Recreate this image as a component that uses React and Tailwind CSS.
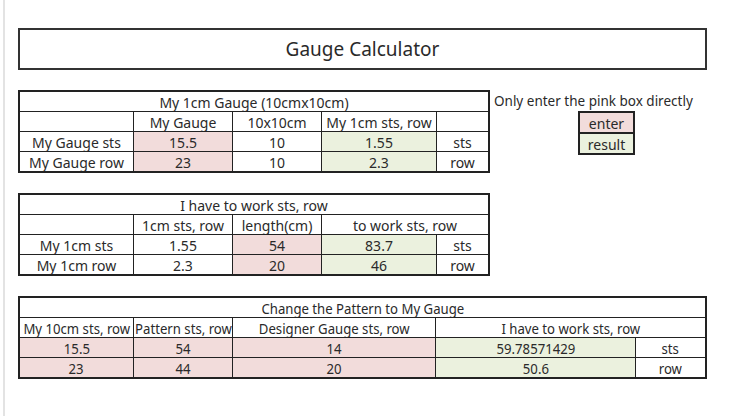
import React from "react";

const F = { fontFamily: '"Noto Sans", "Noto Sans CJK KR", sans-serif' };

function Cell({ children, bg = "bg-white", span = "", narrow = false }) {
  return (
    <div className={`${bg} ${span} flex items-center justify-center h-[19px] pt-[2px] text-[14px] leading-none text-[#2a2a2a] whitespace-nowrap overflow-hidden`}>
      {narrow ? <span className="inline-block scale-x-[0.94]">{children}</span> : children}
    </div>
  );
}

const P = "bg-[#f2dcdb]";
const G = "bg-[#ebf1de]";

export default function App() {
  return (
    <div className="flex w-[743px] h-[416px] bg-white overflow-hidden" style={F}>
      <div className="ml-[3px] w-[2px] h-full bg-[#e3e3e3]" />
      <div className="ml-[13px] pt-[28px] flex flex-col">
        <div className="w-[689px] h-[42px] border-2 border-[#333] flex items-center justify-center text-[19px] text-[#2a2a2a]">
          Gauge Calculator
        </div>

        <div className="mt-[20px] flex">
          <div className="border-2 border-[#222] bg-[#222] grid grid-cols-[113px_98px_88px_114px_51px] gap-px">
            <Cell span="col-span-5">My 1cm Gauge (10cmx10cm)</Cell>
            <Cell></Cell>
            <Cell>My Gauge</Cell>
            <Cell>10x10cm</Cell>
            <Cell>My 1cm sts, row</Cell>
            <Cell></Cell>
            <Cell>My Gauge sts</Cell>
            <Cell bg={P}>15.5</Cell>
            <Cell>10</Cell>
            <Cell bg={G}>1.55</Cell>
            <Cell>sts</Cell>
            <Cell>My Gauge row</Cell>
            <Cell bg={P}>23</Cell>
            <Cell>10</Cell>
            <Cell bg={G}>2.3</Cell>
            <Cell>row</Cell>
          </div>
          <div className="ml-[4px] flex flex-col items-start">
            <div className="h-[21px] pt-[2px] flex items-center text-[13.5px] text-[#2a2a2a] leading-none">Only enter the pink box directly</div>
            <div className="ml-[84px] border-2 border-[#222] bg-[#222] grid grid-cols-[53px] gap-[2px]">
              <Cell bg={P}>enter</Cell>
              <Cell bg={G}>result</Cell>
            </div>
          </div>
        </div>

        <div className="mt-[20px] flex">
          <div className="border-2 border-[#222] bg-[#222] grid grid-cols-[113px_98px_88px_114px_51px] gap-px">
            <Cell span="col-span-5">I have to work sts, row</Cell>
            <Cell></Cell>
            <Cell>1cm sts, row</Cell>
            <Cell>length(cm)</Cell>
            <Cell span="col-span-2">to work sts, row</Cell>
            <Cell>My 1cm sts</Cell>
            <Cell>1.55</Cell>
            <Cell bg={P}>54</Cell>
            <Cell bg={G}>83.7</Cell>
            <Cell>sts</Cell>
            <Cell>My 1cm row</Cell>
            <Cell>2.3</Cell>
            <Cell bg={P}>20</Cell>
            <Cell bg={G}>46</Cell>
            <Cell>row</Cell>
          </div>
        </div>

        <div className="mt-[20px] flex">
          <div className="border-2 border-[#222] bg-[#222] grid grid-cols-[113px_98px_202px_199px_69px] gap-px">
            <Cell narrow span="col-span-5">Change the Pattern to My Gauge</Cell>
            <Cell narrow>My 10cm sts, row</Cell>
            <Cell narrow>Pattern sts, row</Cell>
            <Cell narrow>Designer Gauge sts, row</Cell>
            <Cell narrow span="col-span-2">I have to work sts, row</Cell>
            <Cell narrow bg={P}>15.5</Cell>
            <Cell narrow bg={P}>54</Cell>
            <Cell narrow bg={P}>14</Cell>
            <Cell narrow bg={G}>59.78571429</Cell>
            <Cell narrow>sts</Cell>
            <Cell narrow bg={P}>23</Cell>
            <Cell narrow bg={P}>44</Cell>
            <Cell narrow bg={P}>20</Cell>
            <Cell narrow bg={G}>50.6</Cell>
            <Cell narrow>row</Cell>
          </div>
        </div>
      </div>
    </div>
  );
}
